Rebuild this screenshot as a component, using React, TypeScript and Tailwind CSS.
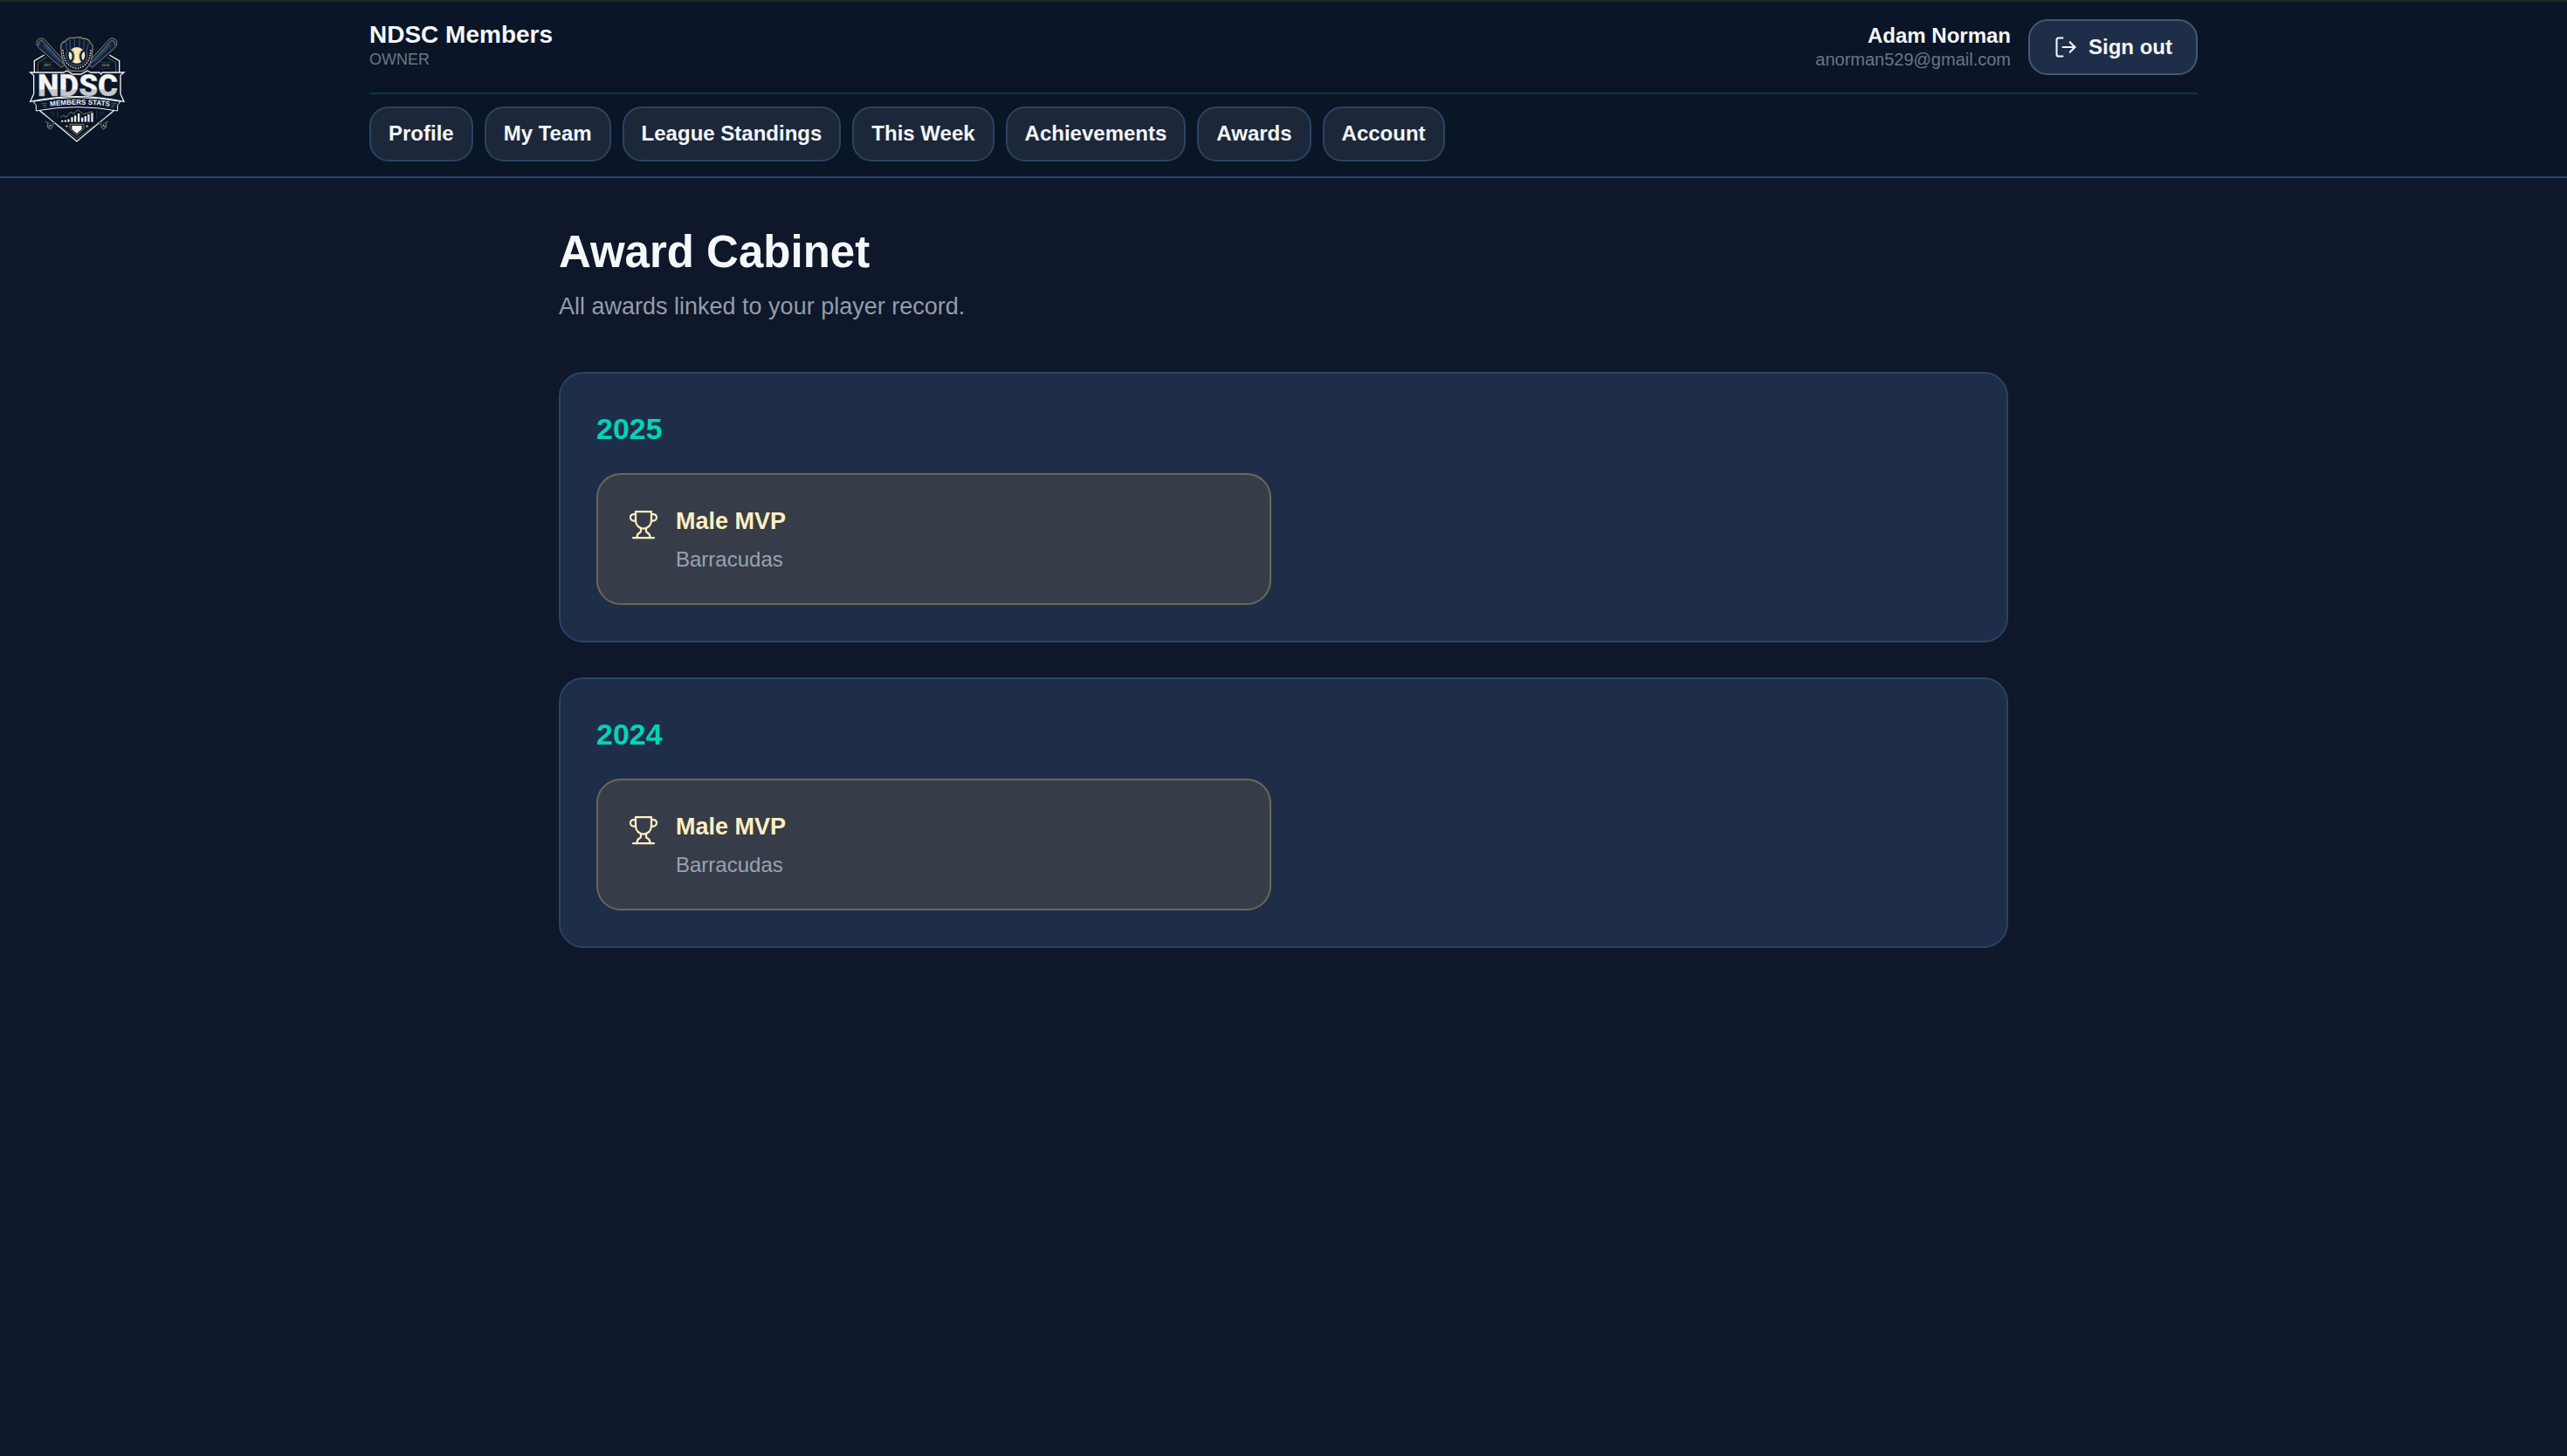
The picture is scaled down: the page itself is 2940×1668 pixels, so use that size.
interface Award {
  title: string;
  team: string;
}

interface AwardYear {
  year: string;
  awards: Award[];
}

const NAV_ITEMS = [
  "Profile",
  "My Team",
  "League Standings",
  "This Week",
  "Achievements",
  "Awards",
  "Account",
];

const AWARD_YEARS: AwardYear[] = [
  { year: "2025", awards: [{ title: "Male MVP", team: "Barracudas" }] },
  { year: "2024", awards: [{ title: "Male MVP", team: "Barracudas" }] },
];

const CHART_BARS = [
  { x: 120, h: 5 },
  { x: 131, h: 6 },
  { x: 142, h: 9 },
  { x: 154, h: 16 },
  { x: 165, h: 22 },
  { x: 177, h: 29 },
  { x: 189, h: 15 },
  { x: 200, h: 20 },
  { x: 211, h: 26 },
  { x: 223, h: 31 },
];

function Bat() {
  return (
    <>
      <path
        d="M37 42C33 30 42 19 56 21C63 23 67 29 72 35L136 104L122 122L46 56C41 52 38 47 37 42Z"
        fill="#14253f"
        stroke="#8d8263"
        strokeWidth="3"
      />
      <path d="M44 45C41 35 47 28 55 29L128 108" fill="none" stroke="#aeb5c2" strokeWidth="2" />
      <path d="M60 44L116 101" stroke="#2a4265" strokeWidth="7" />
      <path
        d="M282 306L272 312C278 320 276 329 266 333C260 331 257 325 258 319L249 310"
        fill="#14253f"
        stroke="#8d8263"
        strokeWidth="3"
      />
      <path d="M264 318L270 326" stroke="#e5e7eb" strokeWidth="3" />
    </>
  );
}

function Logo() {
  return (
    <svg viewBox="0 0 348 390" className="h-[130px] w-[116px]" role="img" aria-label="NDSC logo">
      <defs>
        <linearGradient id="letters" x1="0" y1="0" x2="0" y2="1">
          <stop offset="0.57" stopColor="#f4f5fa" />
          <stop offset="0.6" stopColor="#c6c8cf" />
        </linearGradient>
        <path id="ribbon" d="M70 256Q180 240 300 256" />
      </defs>

      {/* shield */}
      <path
        d="M28 138V98L62 78M320 138V98L286 78"
        fill="none"
        stroke="#f1f3f8"
        strokeWidth="4"
      />
      <path
        d="M40 136V104L70 86M308 136V104L278 86"
        fill="none"
        stroke="#8d8263"
        strokeWidth="2"
      />
      <path d="M38 262L174 375L310 262" fill="#091427" stroke="#f1f3f8" strokeWidth="4" />
      <path d="M50 276L174 364L298 276" fill="none" stroke="#8d8263" strokeWidth="2" />

      <Bat />
      <g transform="translate(348 0) scale(-1 1)">
        <Bat />
      </g>

      <path d="M54 103H94M54 124H94M252 103H292M252 124H292" stroke="#3b4252" strokeWidth="2" />
      <g
        fill="#8d8263"
        fontFamily="Liberation Sans, sans-serif"
        fontSize="12"
        fontWeight="bold"
        textAnchor="middle"
      >
        <text x="74" y="116">EST.</text>
        <text x="272" y="116">2024</text>
      </g>

      {/* glove and ball */}
      <path
        d="M120 58C116 42 124 32 136 30C140 20 156 16 164 20C176 14 190 18 196 22C208 20 218 28 220 36C230 42 230 58 226 72C228 98 214 124 194 133H154C132 124 122 92 120 58Z"
        fill="#0d1b31"
        stroke="#8d8263"
        strokeWidth="4"
      />
      <path
        d="M136 32L142 72M150 24L152 62M166 22L166 54M184 22L182 54M200 26L196 62M214 36L206 72"
        stroke="#31476a"
        strokeWidth="4"
      />
      <path
        d="M126 60C128 92 138 118 174 124C210 118 220 92 222 60"
        fill="none"
        stroke="#d9dde6"
        strokeWidth="4"
        strokeDasharray="5 4"
      />
      <path
        d="M138 70C136 96 150 114 174 114C198 114 212 96 210 70"
        fill="none"
        stroke="#8d8263"
        strokeWidth="2"
      />
      <circle cx="174" cy="79" r="28" fill="#fbe9b6" />
      <path
        d="M150 62C164 70 165 90 154 100M198 62C184 70 183 90 194 100"
        fill="none"
        stroke="#14253f"
        strokeWidth="7"
      />
      <path
        d="M158 60C168 70 168 90 160 102M190 60C180 70 180 90 188 102"
        fill="none"
        stroke="#8d8263"
        strokeWidth="2"
      />

      {/* main banner */}
      <path
        d="M14 138H128L140 132L160 144H188L210 132L222 138H252L257 144L262 138H336L324 148V212L336 238Q174 204 14 238L26 212V148Z"
        fill="#0a162a"
        stroke="#f1f3f8"
        strokeWidth="4"
      />
      <text
        x="177"
        y="220"
        fontFamily="Roboto, Liberation Sans, sans-serif"
        fontSize="105"
        fontWeight="900"
        textAnchor="middle"
        fill="url(#letters)"
        stroke="#b3a67c"
        strokeWidth="1"
      >
        NDSC
      </text>

      {/* ribbon */}
      <path
        d="M24 238L34 250V270Q174 244 314 270V250L324 238Q174 210 24 238Z"
        fill="#0a162a"
        stroke="#f1f3f8"
        strokeWidth="3"
      />
      <path
        d="M52 245H70M56 251H70M60 257H70M292 245H310M292 251H306M292 257H302"
        stroke="#8d8263"
        strokeWidth="2"
      />
      <text
        fontFamily="Liberation Sans, sans-serif"
        fontSize="24"
        fontWeight="bold"
        textAnchor="middle"
        fill="#f1f3f8"
      >
        <textPath href="#ribbon" startOffset="50%">
          MEMBERS STATS
        </textPath>
      </text>

      {/* stats chart */}
      {CHART_BARS.map((bar) => (
        <rect key={bar.x} x={bar.x} y={308 - bar.h} width="7" height={bar.h} fill="#e5e7eb" />
      ))}
      <path
        d="M118 292L128 286L138 292L152 274L164 280L178 266L196 282L228 272"
        fill="none"
        stroke="#b3a67c"
        strokeWidth="2"
      />
      <path d="M108 268V296M242 268V296" stroke="#3b5070" strokeWidth="2" />
      <path d="M82 276H98M86 284H98M250 276H268M250 284H262" stroke="#3b4252" strokeWidth="2" />
      <path
        d="M150 316H198V332L174 354L150 332Z"
        fill="#091427"
        stroke="#8d8263"
        strokeWidth="3"
      />
      <path d="M157 321H191V333L174 348L157 333Z" fill="#f4f5fa" />
      <path
        d="M139 317L141 321L145 322L141 325L139 329L137 325L133 322L137 321ZM209 317L211 321L215 322L211 325L209 329L207 325L203 322L207 321Z"
        fill="#b3a67c"
      />
    </svg>
  );
}

function LogOutIcon() {
  return (
    <svg
      viewBox="0 0 24 24"
      className="size-7"
      fill="none"
      stroke="currentColor"
      strokeWidth="1.75"
      strokeLinecap="round"
      strokeLinejoin="round"
      aria-hidden="true"
    >
      <path d="M9 21H5a2 2 0 0 1-2-2V5a2 2 0 0 1 2-2h4" />
      <path d="m16 17 5-5-5-5" />
      <path d="M21 12H9" />
    </svg>
  );
}

function TrophyIcon() {
  return (
    <svg
      viewBox="0 0 24 24"
      className="mt-[5px] size-9 shrink-0"
      fill="none"
      stroke="currentColor"
      strokeWidth="1.5"
      strokeLinecap="round"
      strokeLinejoin="round"
      aria-hidden="true"
    >
      <path d="M6 9H4.5a2.5 2.5 0 0 1 0-5H6" />
      <path d="M18 9h1.5a2.5 2.5 0 0 0 0-5H18" />
      <path d="M4 22h16" />
      <path d="M10 14.66V17c0 .55-.47.98-.97 1.21C7.85 18.75 7 20.24 7 22" />
      <path d="M14 14.66V17c0 .55.47.98.97 1.21C16.15 18.75 17 20.24 17 22" />
      <path d="M18 2H6v7a6 6 0 0 0 12 0V2Z" />
    </svg>
  );
}

function Header() {
  return (
    <header className="grid grid-cols-[1fr_minmax(0,2094px)_1fr] items-center border-t-2 border-b-2 border-t-[#262626] border-b-[#2a4365] bg-[#0a1527]">
      <a href="#home" className="justify-self-start pl-[30px]">
        <Logo />
      </a>

      <div>
        <div className="flex items-center justify-between border-b-2 border-[#0a3a41] py-5">
          <div className="pb-1">
            <p className="text-[28px] leading-8 font-bold text-[#f5f7fb]">NDSC Members</p>
            <p className="text-[18px] leading-6 text-[#6b7688] uppercase">Owner</p>
          </div>
          <div className="flex items-center gap-5">
            <div className="pb-0.5 text-right">
              <p className="text-2xl leading-7 font-bold text-[#f5f7fb]">Adam Norman</p>
              <p className="mt-0.5 text-xl leading-[22px] text-[#6b7688]">anorman529@gmail.com</p>
            </div>
            <button
              type="button"
              className="flex h-16 items-center gap-3 rounded-[22px] border-2 border-[#475770] bg-[#1e2e48] px-[27px] text-2xl font-bold text-[#f5f7fb]"
            >
              <LogOutIcon />
              Sign out
            </button>
          </div>
        </div>

        <nav className="flex flex-wrap gap-[13px] pt-[14px] pb-[17px]">
          {NAV_ITEMS.map((item) => (
            <a
              key={item}
              href={`#${item.toLowerCase().replaceAll(" ", "-")}`}
              className="rounded-[22px] border-2 border-[#2a4365] bg-[#1c273a] px-5 pt-[13px] pb-[14px] text-2xl font-bold text-[#f5f7fb]"
            >
              {item}
            </a>
          ))}
        </nav>
      </div>
      <div />
    </header>
  );
}

function AwardCard({ award }: { award: Award }) {
  return (
    <article className="flex items-start gap-[19px] rounded-[28px] border-2 border-[#6a6859] bg-[#373d48] p-[34px]">
      <span className="text-[#ffefc2]">
        <TrophyIcon />
      </span>
      <div>
        <h3 className="text-[27px] leading-[38px] font-bold text-[#ffefc2]">{award.title}</h3>
        <p className="mt-2 text-2xl leading-[33px] text-[#97a3b4]">{award.team}</p>
      </div>
    </article>
  );
}

export default function App() {
  return (
    <div className="min-h-screen bg-[#0f172a] font-['Liberation_Sans',Arial,sans-serif]">
      <Header />

      <main className="mx-auto max-w-[1660px] pt-[53px] pb-16">
        <h1 className="text-[51px] leading-[64px] font-bold text-[#f5f7fb]">Award Cabinet</h1>
        <p className="mt-2.5 text-[27px] leading-10 text-[#929dac]">
          All awards linked to your player record.
        </p>

        <div className="mt-[55px] space-y-10">
          {AWARD_YEARS.map(({ year, awards }) => (
            <section
              key={year}
              className="rounded-[28px] border-2 border-[#2a4365] bg-[#1e2e48] p-[41px]"
            >
              <h2 className="text-[34px] leading-[44px] font-bold text-[#00d4b8]">{year}</h2>
              <div className="mt-[29px] grid grid-cols-2 gap-7">
                {awards.map((award) => (
                  <AwardCard key={award.title} award={award} />
                ))}
              </div>
            </section>
          ))}
        </div>
      </main>
    </div>
  );
}
